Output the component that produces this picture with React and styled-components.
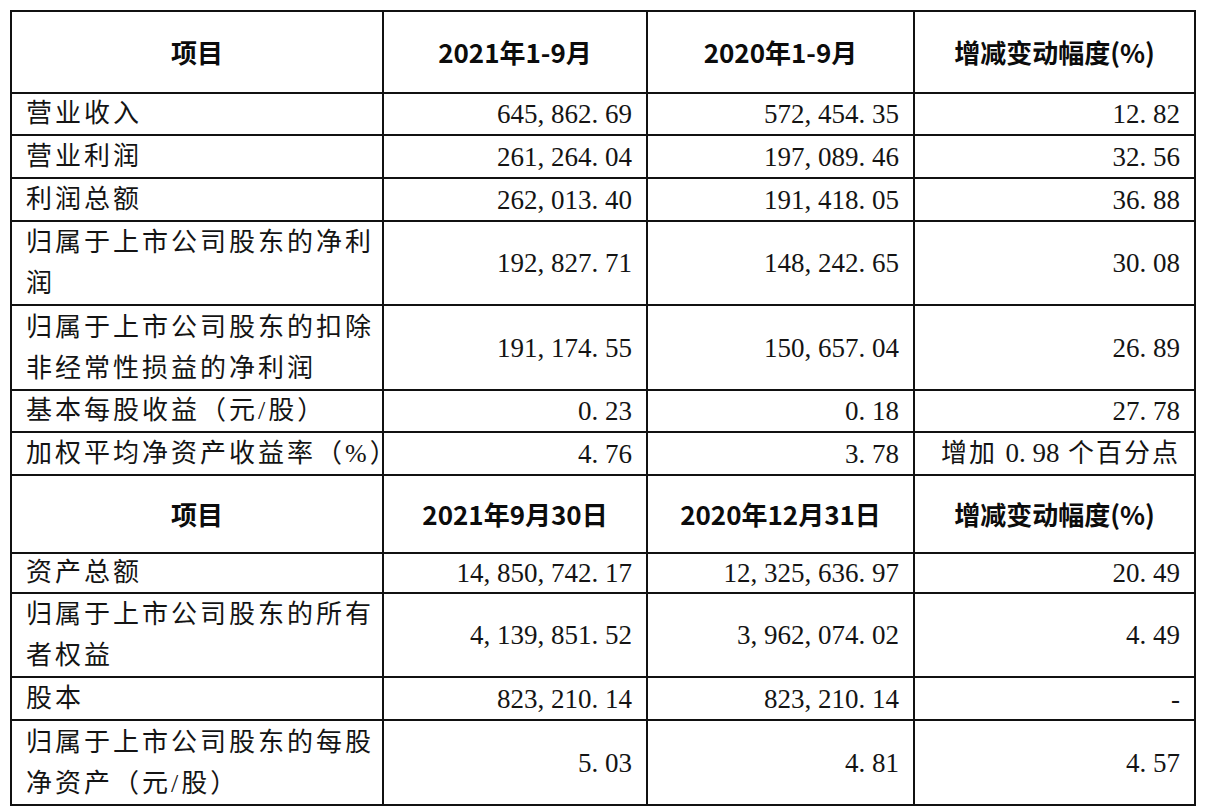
import React from "react";
import styled, { createGlobalStyle } from "styled-components";

const GlobalStyle = createGlobalStyle`
  html, body {
    margin: 0;
    padding: 0;
    background: #ffffff;
  }
  body {
    font-family: "Liberation Serif", "Noto Sans CJK SC", serif;
    color: #141414;
  }
`;

const Page = styled.div`
  padding: 10px 0 0 10px;
`;

const Table = styled.table`
  border-collapse: collapse;
  table-layout: fixed;
  width: 1184px;
  border: 2px solid #111;
`;

const Row = styled.tr`
  height: ${({ $h }) => $h}px;
`;

const HeadCell = styled.th`
  border: 2px solid #111;
  padding: 0;
  font-family: "Noto Sans CJK SC", sans-serif;
  font-weight: 700;
  font-size: 26px;
  line-height: 36px;
  text-align: center;
  vertical-align: middle;
  color: #0c0c0c;
  white-space: nowrap;
`;

const LabelCell = styled.td`
  border: 2px solid #111;
  padding: 0 10px 0 14px;
  font-family: "Liberation Serif", "Noto Sans CJK SC", serif;
  font-size: 26px;
  letter-spacing: 3px;
  line-height: ${({ $double }) => ($double ? "41px" : "36px")};
  white-space: nowrap;
  vertical-align: middle;
`;

const ValueCell = styled.td`
  border: 2px solid #111;
  padding: 0 14px 0 8px;
  font-family: "Liberation Serif", "Noto Sans CJK SC", serif;
  line-height: 36px;
  text-align: right;
  white-space: nowrap;
  vertical-align: middle;
  letter-spacing: ${({ $spaced }) => ($spaced ? "2px" : "0")};
  font-size: ${({ $spaced }) => ($spaced ? "26px" : "27px")};
`;

const Punct = styled.span`
  display: inline-block;
  width: 0.5em;
  text-align: left;
`;

const Digits = styled.span`
  letter-spacing: 0;
  font-size: 27px;
`;

// SimSun-like half-width punctuation: comma and dot take a full digit cell
const Num = ({ v }) => (
  <Digits>
    {v.split("").map((ch, i) =>
      ch === "," || ch === "." ? <Punct key={i}>{ch}</Punct> : ch
    )}
  </Digits>
);

const incomeRows = [
  { h: 42, label: ["营业收入"], a: "645,862.69", b: "572,454.35", c: "12.82" },
  { h: 43, label: ["营业利润"], a: "261,264.04", b: "197,089.46", c: "32.56" },
  { h: 43, label: ["利润总额"], a: "262,013.40", b: "191,418.05", c: "36.88" },
  { h: 84, label: ["归属于上市公司股东的净利", "润"], a: "192,827.71", b: "148,242.65", c: "30.08" },
  { h: 85, label: ["归属于上市公司股东的扣除", "非经常性损益的净利润"], a: "191,174.55", b: "150,657.04", c: "26.89" },
  { h: 42, label: ["基本每股收益（元/股）"], a: "0.23", b: "0.18", c: "27.78" },
  { h: 43, label: ["加权平均净资产收益率（%）"], a: "4.76", b: "3.78", c: "ratio" },
];

const balanceRows = [
  { h: 40, label: ["资产总额"], a: "14,850,742.17", b: "12,325,636.97", c: "20.49" },
  { h: 82, label: ["归属于上市公司股东的所有", "者权益"], a: "4,139,851.52", b: "3,962,074.02", c: "4.49" },
  { h: 43, label: ["股本"], a: "823,210.14", b: "823,210.14", c: "-" },
  { h: 85, label: ["归属于上市公司股东的每股", "净资产（元/股）"], a: "5.03", b: "4.81", c: "4.57" },
];

const Label = ({ lines }) =>
  lines.map((l, i) => (
    <React.Fragment key={i}>
      {i > 0 && <br />}
      {l}
    </React.Fragment>
  ));

const DataRow = ({ r }) => (
  <Row $h={r.h}>
    <LabelCell $double={r.label.length > 1}>
      <Label lines={r.label} />
    </LabelCell>
    <ValueCell>
      <Num v={r.a} />
    </ValueCell>
    <ValueCell>
      <Num v={r.b} />
    </ValueCell>
    {r.c === "ratio" ? (
      <ValueCell $spaced>
        增加 <Num v="0.98" /> 个百分点
      </ValueCell>
    ) : (
      <ValueCell>{r.c === "-" ? "-" : <Num v={r.c} />}</ValueCell>
    )}
  </Row>
);

const HeadRow = ({ cols, h }) => (
  <Row $h={h}>
    {cols.map((c) => (
      <HeadCell key={c}>{c}</HeadCell>
    ))}
  </Row>
);

const App = () => {
  return (
    <Page>
      <GlobalStyle />
      <Table>
        <colgroup>
          <col style={{ width: 372 }} />
          <col style={{ width: 264 }} />
          <col style={{ width: 267 }} />
          <col style={{ width: 281 }} />
        </colgroup>
        <tbody>
          <HeadRow h={82} cols={["项目", "2021年1-9月", "2020年1-9月", "增减变动幅度(%)"]} />
          {incomeRows.map((r) => (
            <DataRow key={r.label.join("")} r={r} />
          ))}
          <HeadRow h={78} cols={["项目", "2021年9月30日", "2020年12月31日", "增减变动幅度(%)"]} />
          {balanceRows.map((r) => (
            <DataRow key={r.label.join("")} r={r} />
          ))}
        </tbody>
      </Table>
    </Page>
  );
};

export default App;
